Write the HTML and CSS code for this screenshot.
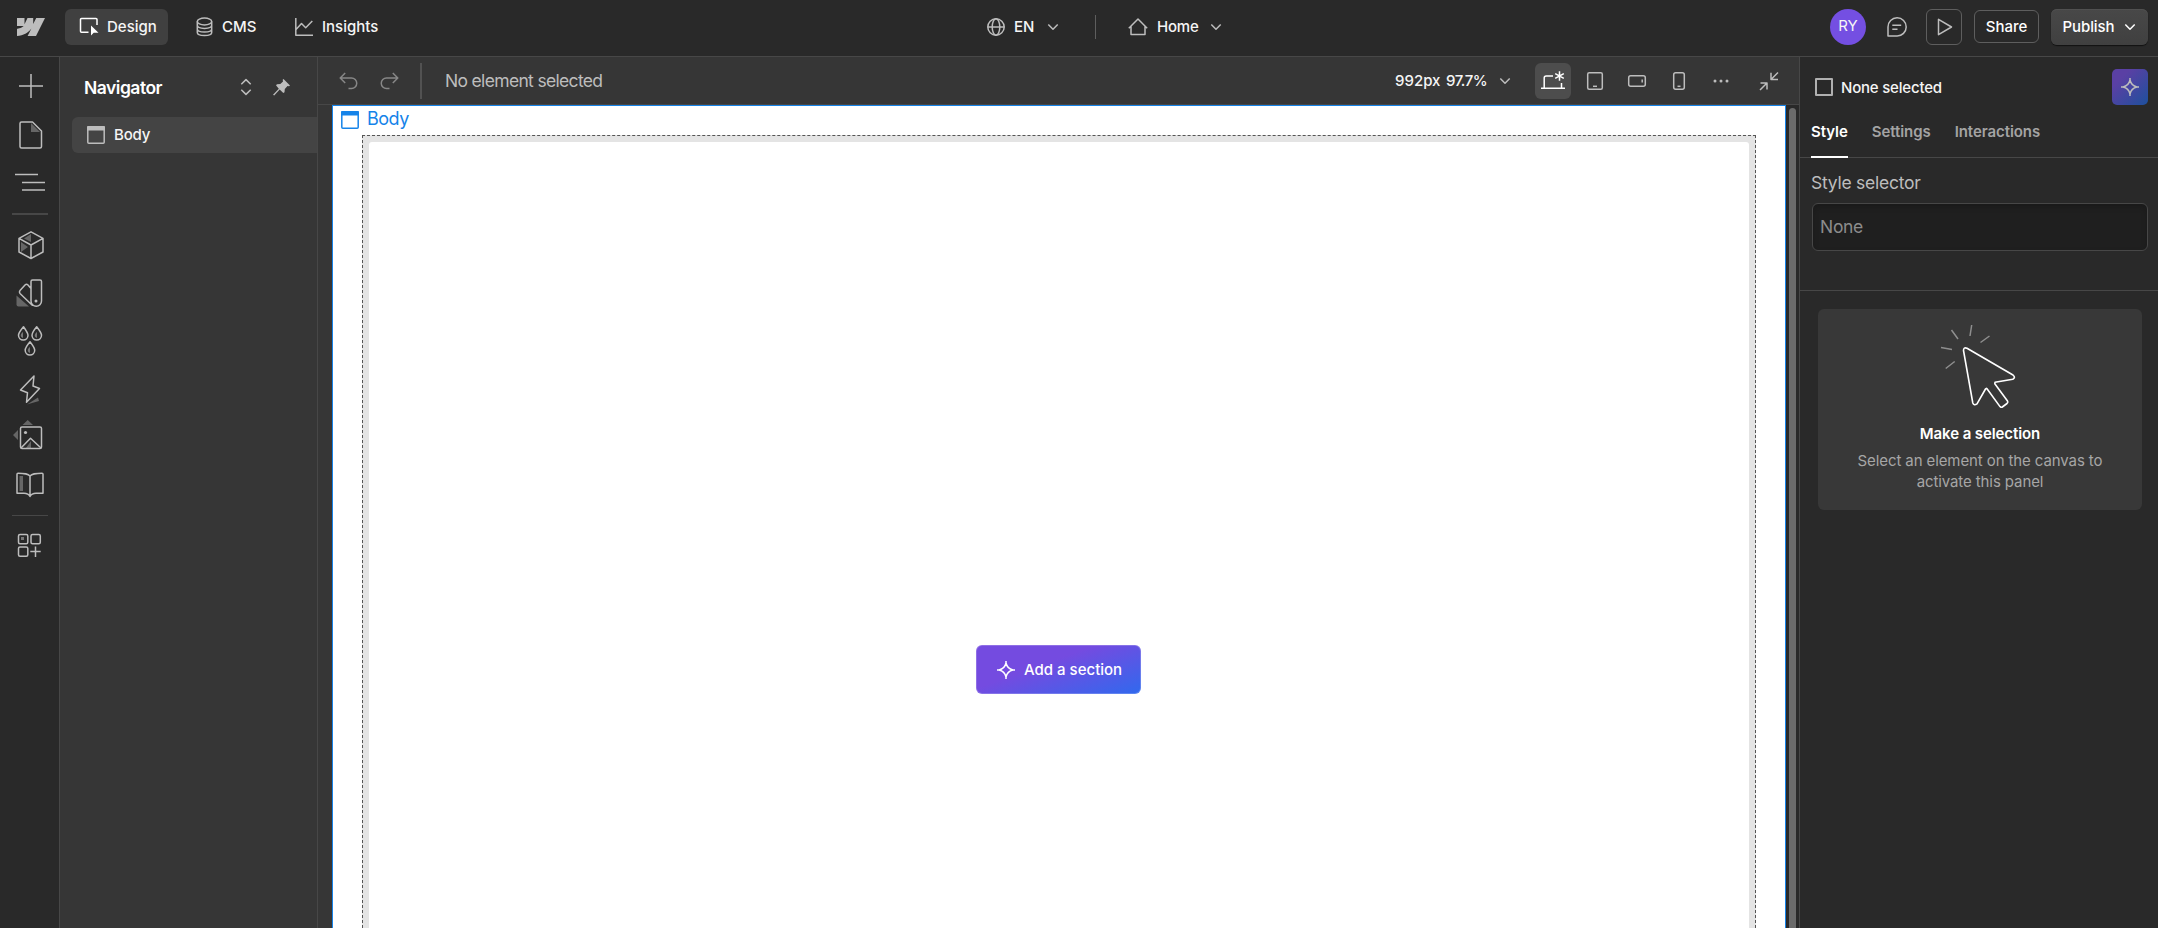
FILE: index.html
```html
<!DOCTYPE html>
<html lang="en">
<head>
  <meta charset="UTF-8" />
  <meta name="viewport" content="width=device-width, initial-scale=1.0" />
  <title>Designer</title>
  <link rel="stylesheet" href="styles.css">
</head>
<body>
  <div class="app">
    <header class="topbar">
      <div class="top-left">
        <svg class="logo" width="28" height="18" viewBox="0 0 28 18"><path fill="#bdbdbd" d="M28 0 19 18H10.600L14.300 10.700H14.200C11.100 14.800 6.500 17.500 0 18V10.800S4.200 10.500 6.700 8H0V0H7.500V6.200L10.500 0H16.200V6.100L19.200 0Z"/></svg>
        <div class="mode active">
          <svg width="20" height="20" viewBox="0 0 20 20"><path class="line white" d="M9.500 15.300H2.500a1 1 0 0 1-1-1V2.500a1 1 0 0 1 1-1H17a1 1 0 0 1 1 1V8"/><path fill="#fff" d="M12 8.500V18.500L14.700 15.800H19.500Z"/></svg>
          <span>Design</span>
        </div>
        <div class="mode cms">
          <svg width="17" height="20" viewBox="0 0 17 20"><g class="line"><ellipse cx="8.500" cy="4.500" rx="7.200" ry="3.400"/><path d="M1.300 4.500V15.500C1.300 19.600 15.700 19.600 15.700 15.500V4.500M1.300 8.300C1.300 12.400 15.700 12.400 15.700 8.300M1.300 12C1.300 16.100 15.700 16.100 15.700 12"/></g></svg>
          <span>CMS</span>
        </div>
        <div class="mode">
          <svg width="18" height="20" viewBox="0 0 18 20"><path class="line" d="M.8 1V18.300H18M1 12.500 6.500 6.500 10.700 10.700 17.300 4"/></svg>
          <span>Insights</span>
        </div>
      </div>
      <div class="top-center">
        <svg width="18" height="18" viewBox="0 0 18 18"><g class="line"><circle cx="9" cy="9" r="8.200"/><ellipse cx="9" cy="9" rx="3.800" ry="8.200"/><path d="M.8 9H17.200"/></g></svg>
        <span class="t-en">EN</span>
        <svg width="12" height="8" viewBox="0 0 12 8"><path class="line" d="M1.300 1.500 6 6.200 10.700 1.500"/></svg>
        <i class="top-divider"></i>
        <svg width="20" height="18" viewBox="0 0 20 18"><path class="line" d="M.8 10.200 10 1 19.200 10.200M3 8.500V16.500H17V8.500"/></svg>
        <span class="t-home">Home</span>
        <svg width="12" height="8" viewBox="0 0 12 8"><path class="line" d="M1.300 1.500 6 6.200 10.700 1.500"/></svg>
      </div>
      <div class="top-right">
        <div class="avatar">RY</div>
        <svg class="comment" width="20" height="20" viewBox="0 0 20 20"><path class="line" d="M1 19V10A9.100 9.100 0 1 1 10 19ZM5.300 8.200H14.200M5.300 12.300H10.500"/></svg>
        <button class="btn play"><svg width="16" height="18" viewBox="0 0 16 18"><path class="line" d="M1.500 1.300V16.700L14.500 9Z"/></svg></button>
        <button class="btn share"><span>Share</span></button>
        <button class="btn publish"><span>Publish</span><svg width="12" height="8" viewBox="0 0 12 8"><path class="line white" d="M1.300 1.500 6 6.200 10.700 1.500"/></svg></button>
      </div>
    </header>

    <div class="workspace">
      <nav class="rail">
        <svg viewBox="0 0 59 48"><path class="line" d="M31 12V36M19 24H43"/></svg>
        <svg viewBox="0 0 59 48"><path fill="#666" d="M31 13V22H40Z"/><path class="line" d="M21.500 12H32.500L41.500 21V36.500A1.500 1.500 0 0 1 40 38H21.500A1.500 1.500 0 0 1 20 36.500V13.500A1.500 1.500 0 0 1 21.500 12Z"/></svg>
        <svg viewBox="0 0 59 48"><path class="line" d="M15 16.500H38M22 24.500H45M22 32H45"/></svg>
        <hr class="thick">
        <svg viewBox="0 0 59 48"><path fill="#666" d="M24 17.500 31 13V21ZM21 21V31L28 26Z"/><path class="line" d="M31 10.800 43 17.300V31L31 37.500 19 31V17.300ZM19 17.300 31 24 43 17.300M31 24V37.500"/></svg>
        <svg viewBox="0 0 59 48"><path fill="#666" d="M16.500 26.500V35.500A2 2 0 0 0 18.500 37.500H29Z"/><path class="line" d="M31 19.500 28 16Q26.500 14.500 25 16L20 21.500Q18.800 23 20 24.500L32.500 36.500M32.500 11H40A1.500 1.500 0 0 1 41.500 12.500V32A5.200 5.200 0 0 1 31 32V12.500A1.500 1.500 0 0 1 32.500 11Z"/><circle cx="36" cy="32" r="1.500" fill="#bdbdbd"/></svg>
        <svg viewBox="0 0 59 48"><path fill="#777" d="M23 15C20 17 20 20 23 21ZM37 15C34 17 34 20 37 21ZM30 30C27 32 27 35 30 36Z"/><path class="line" d="M23.500 9.800C20 14 18.500 16.500 18.500 18.300A4.700 4.700 0 0 0 28 18.300C28 16.500 26.500 14 23.500 9.800ZM36.700 9.800C33.200 14 32 16.500 32 18.300A4.700 4.700 0 0 0 41.500 18.300C41.500 16.500 40 14 36.700 9.800ZM30 24.800C26.500 29 25.200 31.500 25.200 33.300A4.700 4.700 0 0 0 34.700 33.300C34.700 31.500 33.300 29 30 24.800Z"/></svg>
        <svg viewBox="0 0 59 48"><path fill="#666" d="M27 39.500 38 32.500 39 36Z"/><path class="line" d="M34 11 20.500 25 27.500 27.700 26.500 37.300 39.500 23.500 33 21Z"/></svg>
        <svg viewBox="0 0 59 48"><path fill="#666" d="M22.500 12H33L27.700 7ZM18 17V27L13 22ZM26 35 31 28V35Z"/><rect class="line" x="20.500" y="14" width="21" height="21.500" rx="1.500"/><path class="line" d="M21 35 30.500 25.300 41 35"/><circle cx="25.500" cy="19.500" r="1.600" fill="#bdbdbd"/></svg>
        <svg viewBox="0 0 59 48"><path fill="#666" d="M19.500 15H23V30H19.500Z"/><path class="line" d="M30 15C28 12.500 25 12.200 18 12.200A1 1 0 0 0 17 13.200V32.300H24C27 32.300 29 33.500 30 35.500 31 33.500 33 32.300 36 32.300H43V13.200A1 1 0 0 0 42 12.200C35 12.200 32 12.500 30 15V35"/></svg>
        <hr>
        <svg viewBox="0 0 59 48"><path fill="#777" d="M21 16H24V19H21Z"/><g class="line"><rect x="18.500" y="13.500" width="9.300" height="9.300" rx="1.500"/><rect x="31" y="13.500" width="9.300" height="9.300" rx="1.500"/><rect x="18.500" y="26" width="9.300" height="9.300" rx="1.500"/><path d="M35.500 25.500V36M30.300 30.500H40.700"/></g></svg>
      </nav>

      <aside class="navigator">
        <div class="nav-head">
          <h2>Navigator</h2>
          <svg width="12" height="18" viewBox="0 0 12 18"><path class="line" d="M1.300 6.300 6 1.600 10.700 6.300M1.300 11.700 6 16.400 10.700 11.700"/></svg>
          <svg class="pin" width="17" height="17" viewBox="0 0 17 17"><path fill="#bdbdbd" d="M10.500 0 17 6.500 16 7.300 14.500 7 11.800 10 11.500 13.300 10.300 14 6.700 10.500 1.200 16.600 0 15.800 5.800 9.700 3 6.300 4 5.200 7.300 5 10 2.500 9.700.8Z"/></svg>
        </div>
        <div class="nav-item">
          <svg width="18" height="18" viewBox="0 0 18 18"><rect class="line" x=".8" y=".8" width="16.400" height="16.400" rx="1"/><path fill="#bdbdbd" d="M0 1A1 1 0 0 1 1 0H17A1 1 0 0 1 18 1V4.500H0Z"/></svg>
          <span>Body</span>
        </div>
      </aside>

      <main class="stage">
        <div class="toolbar">
          <svg class="history" width="19" height="18" viewBox="0 0 19 18"><path class="line" d="M6.200 1 1.200 6 6.200 11M1.200 6H12.500A5.200 5.200 0 0 1 12.500 16.500H9.500"/></svg>
          <svg class="history" width="19" height="18" viewBox="0 0 19 18"><path class="line" d="M12.800 1 17.800 6 12.800 11M17.800 6H6.500A5.200 5.200 0 0 0 6.500 16.500H9.500"/></svg>
          <i class="tool-divider"></i>
          <span class="status">No element selected</span>
          <div class="tools">
            <span class="px">992px</span>
            <span class="pct">97.7%</span>
            <svg class="zoom-arrow" width="12" height="8" viewBox="0 0 12 8"><path class="line" d="M1.300 1.500 6 6.200 10.700 1.500"/></svg>
            <div class="tool active"><svg viewBox="0 0 36 36"><path class="line white" d="M6 25.200H30M9.200 25V15A2 2 0 0 1 11.200 13H18M26.500 20V25M24.500 8.300V17.700M20.200 10.700 28.800 15.300M28.800 10.700 20.200 15.300"/></svg></div>
            <div class="tool"><svg viewBox="0 0 36 36"><rect class="line" x="10.700" y="9.700" width="14.600" height="16.600" rx="1.500"/><path class="line" d="M16 23.300H20"/></svg></div>
            <div class="tool"><svg viewBox="0 0 36 36"><rect class="line" x="9.700" y="12.700" width="16.600" height="10.600" rx="2"/><path class="line" d="M23.200 16.500V19.500"/></svg></div>
            <div class="tool"><svg viewBox="0 0 36 36"><rect class="line" x="12.700" y="9.700" width="10.600" height="16.600" rx="2"/><path class="line" d="M16.500 23.300H19.500"/></svg></div>
            <div class="tool"><svg viewBox="0 0 36 36"><g fill="#bdbdbd"><circle cx="12" cy="18" r="1.500"/><circle cx="18" cy="18" r="1.500"/><circle cx="24" cy="18" r="1.500"/></g></svg></div>
            <div class="tool collapse"><svg viewBox="0 0 36 36"><path class="line" d="M27 9.500 20 16.500M20 9.700V16.500H27M9 27 16 20M9.500 20H16V26.500"/></svg></div>
          </div>
        </div>
        <div class="canvas-wrap">
          <div class="canvas">
            <div class="body-label">
              <svg width="18" height="18" viewBox="0 0 18 18"><rect x=".8" y=".8" width="16.400" height="16.400" rx="1" fill="none" stroke="#1583e9" stroke-width="1.500"/><path fill="#1583e9" d="M0 1A1 1 0 0 1 1 0H17A1 1 0 0 1 18 1V4.500H0Z"/></svg>
              <span>Body</span>
            </div>
            <div class="dropzone">
              <div class="dropzone-inner">
                <button class="add-section">
                  <svg width="18" height="18" viewBox="0 0 18 18"><path class="line white" d="M9 2C9.800 5.500 12.500 8.200 16 9 12.500 9.800 9.800 12.500 9 16 8.200 12.500 5.500 9.800 2 9 5.500 8.200 8.200 5.500 9 2ZM9 0V2.500M9 15.500V18M0 9H2.500M15.500 9H18"/></svg>
                  <span>Add a section</span>
                </button>
              </div>
            </div>
          </div>
          <div class="scrollbar"></div>
        </div>
      </main>

      <aside class="panel">
        <div class="panel-head">
          <i class="checkbox"></i>
          <span>None selected</span>
          <button class="ai"><svg width="18" height="18" viewBox="0 0 18 18"><path class="line" d="M9 2C9.800 5.500 12.500 8.200 16 9 12.500 9.800 9.800 12.500 9 16 8.200 12.500 5.500 9.800 2 9 5.500 8.200 8.200 5.500 9 2ZM9 0V2.500M9 15.500V18M0 9H2.500M15.500 9H18"/></svg></button>
        </div>
        <div class="tabs">
          <div class="tab active">Style</div>
          <div class="tab">Settings</div>
          <div class="tab">Interactions</div>
        </div>
        <div class="selector">
          <label>Style selector</label>
          <div class="input">None</div>
        </div>
        <div class="empty-card">
          <svg width="76" height="84" viewBox="0 0 76 84"><path fill="none" stroke="#8e8e8e" stroke-width="1.500" d="M31.700 1 30 12M11.500 6 18 15M49.500 12 40.500 18.500M1 23.500 12 25.500M5.700 44.500 14.700 37.500"/><path fill="none" stroke="#fff" stroke-width="1.600" stroke-linejoin="round" d="M27 24.300 73 51Q76 53.500 72.800 55.200L55 58.300 54.800 59.800 67.500 77Q68.200 78.500 67 79.500L62.300 83Q61 83.800 60 82.600L47 64.700Q46.300 64 45.500 65L37 79.800Q34 82 32.800 79L23.500 26.500Q23.500 22.800 27 24.300Z"/></svg>
          <h3>Make a selection</h3>
          <p>Select an element on the canvas to<br>activate this panel</p>
        </div>
      </aside>
    </div>
  </div>
</body>
</html>
```
FILE: styles.css
```css
* {
  box-sizing: border-box;
}

body {
  margin: 0;
  font-family: Inter, "Liberation Sans", sans-serif;
  font-size: 15px;
  background: #292929;
  color: #f5f5f5;
  overflow: hidden;
}

svg {
  display: block;
  flex-shrink: 0;
}

span {
  white-space: nowrap;
}

button {
  font-family: inherit;
  font-size: 15px;
  color: #fff;
  padding: 0;
}

.line {
  fill: none;
  stroke: #bdbdbd;
  stroke-width: 1.5;
  stroke-linejoin: round;
}

.line.white {
  stroke: #fff;
}

.app {
  display: flex;
  flex-direction: column;
  height: 100vh;
}

/* top bar */
.topbar {
  display: flex;
  height: 57px;
  padding: 0 10px 3px 17px;
  background: #292929;
  border-bottom: 1px solid #474747;
  font-weight: 500;
}

.top-left,
.top-center,
.top-right {
  display: flex;
  align-items: center;
}

.top-left {
  width: 970px;
}

.logo {
  margin-right: 20px;
}

.mode {
  display: flex;
  align-items: center;
  gap: 9px;
  height: 36px;
  padding-left: 14px;
  margin-right: 14px;
  border-radius: 6px;
}

.mode.active {
  width: 103px;
  gap: 8px;
  background: #404040;
}

.mode.cms {
  width: 99px;
  margin-right: 0;
}

.top-center {
  gap: 9px;
}

.top-center .t-en {
  width: 24px;
}

.top-center .t-home {
  width: 44px;
  letter-spacing: -0.2px;
}

.top-divider {
  width: 1px;
  height: 24px;
  margin: 0 23px 0 27px;
  background: #5e5e5e;
}

.top-right {
  margin-left: auto;
}

.avatar {
  width: 36px;
  height: 36px;
  padding-bottom: 3px;
  border-radius: 50%;
  background: #744fe2;
  font-weight: 400;
  line-height: 33px;
  text-align: center;
}

.comment {
  margin: 0 19px 0 21px;
}

.btn {
  display: flex;
  align-items: center;
  justify-content: center;
  border: 1px solid #5e5e5e;
  border-radius: 6px;
  background: none;
  font-weight: 500;
}

.play {
  width: 36px;
  height: 36px;
  padding-left: 2px;
}

.share {
  width: 65px;
  height: 33px;
  margin: 0 12px;
}

.publish {
  width: 97px;
  height: 36px;
  gap: 10px;
  border: 0;
  background: linear-gradient(#484848, #404040);
  box-shadow: 0 1px 1px #111, inset 0 1px #505050;
  letter-spacing: -0.1px;
}

/* layout */
.workspace {
  display: flex;
  flex: 1;
  min-height: 0;
}

.rail {
  width: 60px;
  padding-top: 5px;
  border-right: 1px solid #474747;
}

.rail svg {
  width: 59px;
  height: 48px;
}

.rail hr {
  height: 1px;
  margin: 6px 11px 5px 12px;
  border: 0;
  background: #474747;
}

.rail .thick {
  height: 2px;
  margin: 7px 11px 6px 12px;
}

.navigator {
  width: 258px;
  background: #363636;
  border-right: 1px solid #474747;
}

.nav-head {
  display: flex;
  align-items: center;
  height: 60px;
  padding: 0 27px 0 24px;
}

.nav-head h2 {
  flex: 1;
  margin: 0;
  font-size: 17.500px;
  font-weight: 600;
  letter-spacing: -0.5px;
  color: #fff;
}

.pin {
  margin-left: 21px;
}

.nav-item {
  display: flex;
  align-items: center;
  gap: 9px;
  height: 36px;
  margin-left: 12px;
  padding-left: 15px;
  border-radius: 6px 0 0 6px;
  background: #444;
  font-weight: 500;
  letter-spacing: -0.2px;
}

.nav-item span {
  padding-bottom: 1px;
}

/* canvas */
.stage {
  display: flex;
  flex-direction: column;
  width: 1481px;
  background: #363636;
}

.toolbar {
  display: flex;
  align-items: center;
  height: 48px;
  padding-left: 21px;
  border-bottom: 1px solid #474747;
}

.history {
  margin-right: 22px;
  opacity: 0.6;
}

.history + .history {
  margin-right: 21px;
}

.tool-divider {
  width: 2px;
  height: 36px;
  margin-right: 23px;
  background: #525252;
}

.status {
  padding-bottom: 1px;
  font-size: 17.500px;
  letter-spacing: -0.67px;
  color: #bdbdbd;
}

.tools {
  display: flex;
  align-items: center;
  margin-left: auto;
  padding-right: 12px;
  font-weight: 500;
}

.px {
  width: 51px;
}

.pct {
  width: 53px;
  letter-spacing: -0.5px;
}

.zoom-arrow {
  margin-right: 24px;
}

.tool {
  width: 36px;
  height: 36px;
  margin-right: 6px;
  border-radius: 6px;
}

.tool.active {
  background: #4d4d4d;
}

.tool.collapse {
  margin: 0 0 0 6px;
}

.canvas-wrap {
  display: flex;
  flex: 1;
  min-height: 0;
  padding-left: 14px;
}

.canvas {
  display: flex;
  flex-direction: column;
  width: 1454px;
  background: #fff;
  border: 1px solid #1583e9;
  border-bottom: 0;
}

.body-label {
  display: flex;
  gap: 8px;
  height: 29px;
  padding: 5px 0 0 8px;
  font-size: 18px;
  line-height: 16px;
  letter-spacing: -0.5px;
  color: #1583e9;
}

.dropzone {
  flex: 1;
  margin: 0 29px;
  padding: 6px 6px 0;
  background: #e4e4e4;
  border: 1px dashed #555;
  border-bottom: 0;
}

.dropzone-inner {
  display: flex;
  justify-content: center;
  align-items: flex-start;
  height: 100%;
  padding: 503px 1px 0 0;
  border-radius: 3px 3px 0 0;
  background: #fff;
}

.add-section {
  display: flex;
  align-items: center;
  gap: 9px;
  width: 165px;
  height: 49px;
  padding-left: 20px;
  border: 1px solid rgba(255, 255, 255, 0.2);
  border-radius: 6px;
  background: linear-gradient(160deg, #744be0 40%, #3069ee);
  background-origin: border-box;
  font-weight: 500;
}

.scrollbar {
  width: 13px;
  padding: 3px 3px 0;
  background: #292929;
}

.scrollbar::before {
  content: "";
  display: block;
  height: 100%;
  border-radius: 4px 4px 0 0;
  background: #6b6b6b;
}

/* right panel */
.panel {
  flex: 1;
  border-left: 1px solid #474747;
}

.panel-head {
  display: flex;
  align-items: center;
  height: 48px;
  padding: 12px 10px 0 15px;
  font-weight: 500;
}

.panel-head span {
  flex: 1;
  margin-left: 8px;
  letter-spacing: -0.2px;
}

.checkbox {
  width: 18px;
  height: 18px;
  border: 2px solid #b0b0b0;
  border-radius: 1px;
}

.ai {
  display: flex;
  align-items: center;
  justify-content: center;
  width: 36px;
  height: 36px;
  border: 0;
  border-radius: 5px;
  background: linear-gradient(135deg, #5a40a4 25%, #1e509c);
}

.tabs {
  display: flex;
  gap: 24px;
  height: 53px;
  padding-left: 11px;
  border-bottom: 1px solid #474747;
  font-weight: 600;
  line-height: 53px;
  letter-spacing: -0.07px;
  color: #a3a3a3;
}

.tab.active {
  height: 53px;
  color: #fff;
  border-bottom: 2px solid #fff;
}

.selector {
  height: 133px;
  padding: 14px 10px 0 12px;
  border-bottom: 1px solid #474747;
}

.selector label {
  display: block;
  height: 31px;
  margin-left: -1px;
  font-size: 17.500px;
  line-height: 22px;
  letter-spacing: -0.25px;
  color: #bdbdbd;
}

.input {
  height: 48px;
  padding-left: 7px;
  border: 1px solid #474747;
  border-radius: 6px;
  background: #1f1f1f;
  box-shadow: inset 0 3px 5px #1a1a1a;
  font-size: 17.500px;
  line-height: 46px;
  letter-spacing: -0.3px;
  color: #8c8c8c;
}

.empty-card {
  display: flex;
  flex-direction: column;
  align-items: center;
  height: 201px;
  margin: 18px 16px 0 18px;
  padding-top: 15px;
  border-radius: 6px;
  background: #383838;
}

.empty-card svg {
  margin-right: 5px;
}

.empty-card h3 {
  margin: 15px 0 6px;
  font-size: 15px;
  font-weight: 600;
  line-height: 21px;
  letter-spacing: -0.1px;
  color: #fff;
}

.empty-card p {
  margin: 0;
  line-height: 21px;
  letter-spacing: -0.1px;
  text-align: center;
  color: #a6a6a6;
}
```
